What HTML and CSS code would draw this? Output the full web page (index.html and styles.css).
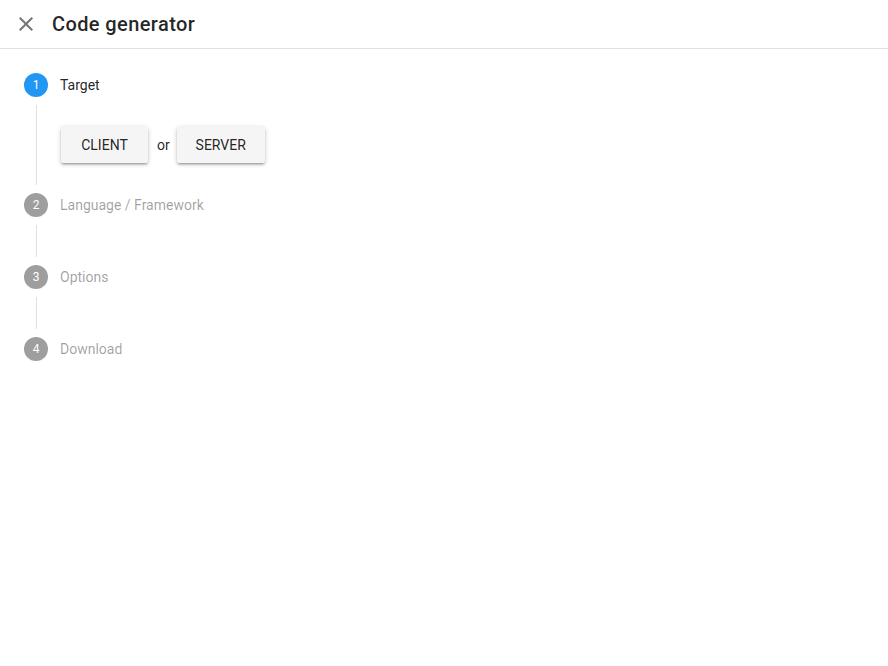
FILE: index.html
```html
<!DOCTYPE html>
<html>
<head>
<meta charset="utf-8">
<link rel="stylesheet" href="styles.css">
</head>
<body>
<header class="bar">
  <button class="close" aria-label="Close">
    <svg width="24" height="24" viewBox="0 0 24 24"><path d="M19 6.41L17.59 5 12 10.59 6.41 5 5 6.41 10.59 12 5 17.59 6.41 19 12 13.41 17.59 19 19 17.59 13.41 12z" fill="#757575"/></svg>
  </button>
  <h1 class="title">Code generator</h1>
</header>
<main class="stepper">
  <div class="step">
    <div class="label active"><span class="dot blue">1</span><span class="text">Target</span></div>
    <div class="content">
      <button class="btn">CLIENT</button>
      <span class="or">or</span>
      <button class="btn">SERVER</button>
    </div>
  </div>
  <div class="step">
    <div class="label"><span class="dot">2</span><span class="text">Language / Framework</span></div>
    <div class="connector"></div>
  </div>
  <div class="step">
    <div class="label"><span class="dot">3</span><span class="text">Options</span></div>
    <div class="connector"></div>
  </div>
  <div class="step">
    <div class="label"><span class="dot">4</span><span class="text">Download</span></div>
  </div>
</main>
</body>
</html>
```
FILE: styles.css
```css
html, body { margin: 0; padding: 0; background: #fff; }
body { font-family: Roboto, "Liberation Sans", sans-serif; color: rgba(0,0,0,0.87); width: 888px; height: 666px; overflow: hidden; }
.bar { border-bottom: 1px solid #e0e0e0; display: flex; align-items: center; box-sizing: border-box; height: 49px; }
.close { width: 24px; height: 24px; padding: 0; margin: 0 14px 0 14px; border: 0; background: none; display: flex; }
.title { margin: 0; font-size: 20px; font-weight: 500; letter-spacing: 0.02em; color: rgba(0,0,0,0.87); }
.stepper { padding: 24px; display: flex; flex-direction: column; }
.label { display: flex; align-items: center; height: 24px; }
.dot { width: 24px; height: 24px; border-radius: 50%; background: #9e9e9e; color: #fff; font-size: 12px; display: flex; align-items: center; justify-content: center; flex: none; }
.dot.blue { background: #2196f3; }
.text { margin-left: 12px; font-size: 14px; color: rgba(0,0,0,0.38); }
.label.active .text { color: rgba(0,0,0,0.87); }
.content { margin: 8px 0 8px 12px; border-left: 1px solid #e0e0e0; padding: 22px 0 22px 24px; display: flex; align-items: center; }
.connector { margin: 8px 0 8px 12px; border-left: 1px solid #e0e0e0; height: 32px; }
.btn { font-family: inherit; min-width: 87px; height: 36px; padding: 0 16px; font-size: 14px; font-weight: 400; color: rgba(0,0,0,0.87); background: #f5f5f5; border: 0; border-radius: 2px; box-shadow: 0 1px 5px rgba(0,0,0,0.2), 0 2px 2px rgba(0,0,0,0.14), 0 3px 1px -2px rgba(0,0,0,0.12); }
.btn + .or + .btn { min-width: 88px; }
.or { font-size: 14px; margin: 0 7px 0 9px; color: rgba(0,0,0,0.87); }
```
